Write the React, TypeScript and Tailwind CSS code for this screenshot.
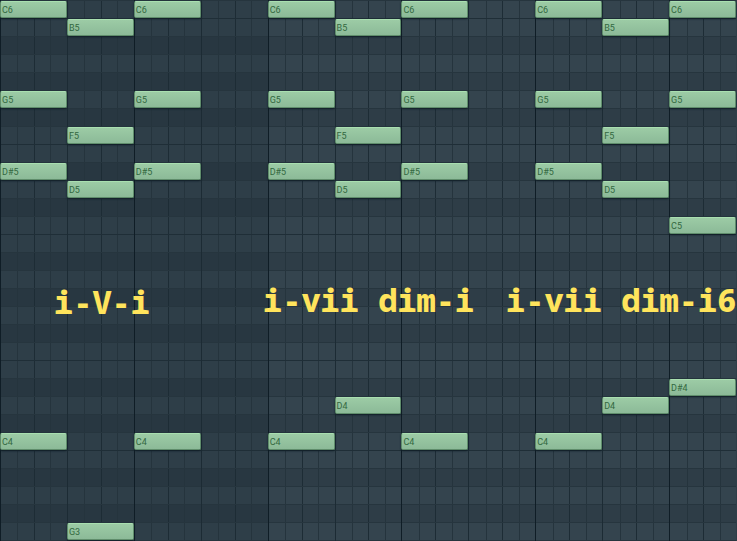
const ROWS = ["C6","B5","A#5","A5","G#5","G5","F#5","F5","E5","D#5","D5","C#5","C5","B4","A#4","A4","G#4","G4","F#4","F4","E4","D#4","D4","C#4","C4","B3","A#3","A3","G#3","G3","F#3"];

const NOTES: Record<string, number[]> = {
  C6: [0, 2, 4, 6, 8, 10],
  B5: [1, 5, 9],
  G5: [0, 2, 4, 6, 8, 10],
  F5: [1, 5, 9],
  "D#5": [0, 2, 4, 6, 8],
  D5: [1, 5, 9],
  C5: [10],
  "D#4": [10],
  D4: [5, 9],
  C4: [0, 2, 4, 6, 8],
  G3: [1],
};

function Beat({ index, dark, pitch, edge }: { index: number; dark: boolean; pitch: string; edge: boolean }) {
  const active = NOTES[pitch]?.includes(index) ?? false;
  const left = index < 4;
  const cell = left ? (dark ? "bg-[#283741]" : "bg-[#2e3e48]") : dark ? "bg-[#2e3d47]" : "bg-[#34444e]";
  const line = index % 2 === 0 ? "border-[#0f1d26]" : "border-[#1c2b34]";
  return (
    <div className={`grid min-w-0 border-l ${line} ${cell}`}>
      <div className={`col-start-1 row-start-1 grid grid-cols-4 border-t ${edge ? "border-[#1f2e37]" : "border-[#26353e]"}`}>
        <span />
        <span className="border-l border-[#25343d]" />
        <span className="border-l border-[#1d2c35]" />
        <span className="border-l border-[#25343d]" />
      </div>
      {active && (
        <div className="z-10 col-start-1 row-start-1 mt-px -ml-px flex h-[17px] items-center rounded-xs border border-[#5f8d6b] border-t-[#a9dfb0] bg-linear-to-b from-[#9ccba5] to-[#8cba98] pl-px font-[Roboto,'Liberation_Sans',sans-serif] text-[9px] leading-3 text-[#33683f] shadow-[0_1px_2px_#0f1d26]">
          {pitch}
        </div>
      )}
    </div>
  );
}

function Caption({ className, children }: { className: string; children: string }) {
  return (
    <p className={`absolute z-20 font-['Noto_Sans_Mono','DejaVu_Sans_Mono',monospace] text-[32px] leading-10 font-extrabold whitespace-pre text-[#ffe45c] ${className}`}>
      {children}
    </p>
  );
}

export default function App() {
  return (
    <main className="relative h-screen overflow-hidden bg-[#2e3e48]">
      {ROWS.map((pitch) => (
        <div key={pitch} className="grid h-[18px] grid-cols-11 pr-px">
          {Array.from({ length: 11 }, (_, i) => (
            <Beat key={i} index={i} dark={pitch.includes("#")} pitch={pitch} edge={/^[BE]/.test(pitch)} />
          ))}
        </div>
      ))}
      <Caption className="top-[282px] left-[54px]">i-V-i</Caption>
      <Caption className="top-[280px] left-[263px]">i-vii dim-i</Caption>
      <Caption className="top-[280px] left-[506px]">i-vii dim-i6</Caption>
    </main>
  );
}
